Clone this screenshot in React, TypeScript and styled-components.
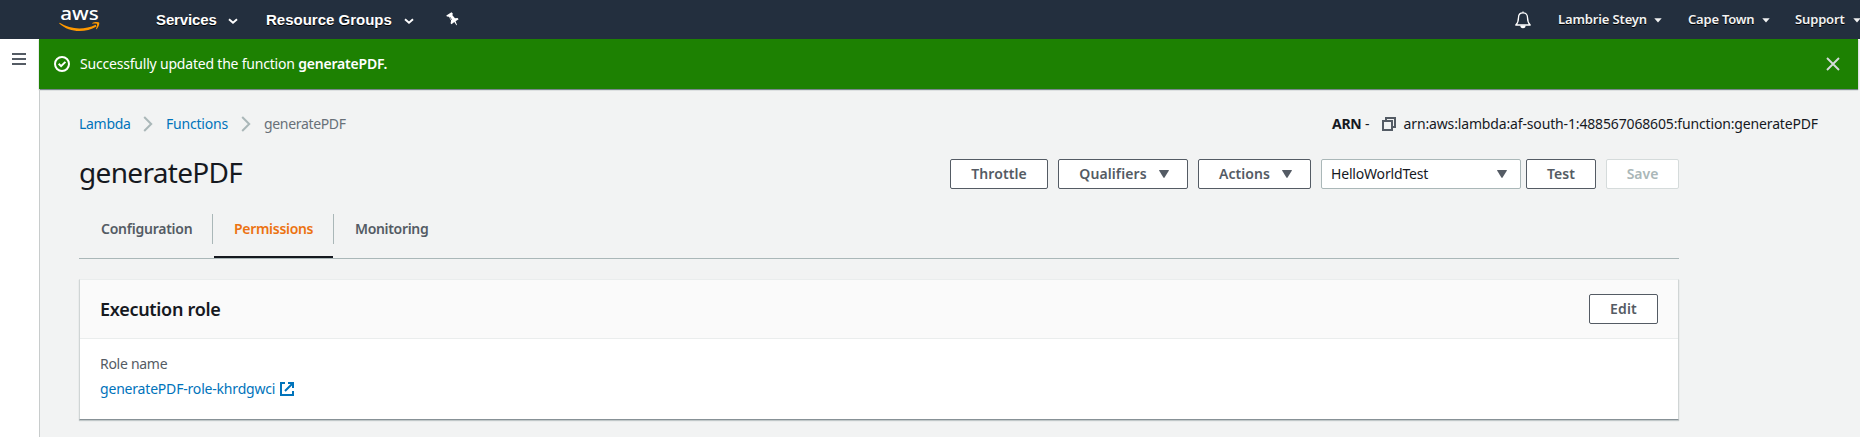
import React from "react";
import styled, { createGlobalStyle, css } from "styled-components";

const GlobalStyle = createGlobalStyle`
  * { box-sizing: border-box; }
  html, body { margin: 0; background: #f2f3f3; overflow: hidden; }
  body {
    font-family: "Noto Sans", "Open Sans", sans-serif;
    font-size: 14px;
    line-height: 20px;
    color: #16191f;
  }
  svg { display: block; flex: none; overflow: visible; }
`;

const Page = styled.div`
  display: flex;
  flex-direction: column;
  width: 1860px;
  height: 437px;
  overflow: hidden;
`;

/* Letter spacing is given in hundredths of a pixel. */
const Label = styled.span<{ $track?: number }>`
  white-space: pre;
  letter-spacing: ${({ $track = 0 }) => $track / 100}px;
`;

const TopBar = styled.header`
  display: flex;
  justify-content: space-between;
  flex: none;
  height: 39px;
  background: #232f3e;
  color: #fff;
`;

const NavGroup = styled.nav`
  display: flex;
  align-items: center;
`;

const HomeLink = styled.a`
  display: flex;
  margin: 1px 55px 0 59px;
`;

const NavItem = styled.a<{ $width: number }>`
  display: flex;
  align-items: center;
  justify-content: space-between;
  width: ${({ $width }) => $width}px;
  font: bold 15px/37px "Liberation Sans", Arial, sans-serif;
  text-shadow: 0 1px 0 #000;

  & + & { margin-left: 28px; }
  svg { margin-top: 3px; }
`;

const PinButton = styled.span`
  display: flex;
  margin: 0 0 1px 32px;
`;

const BellButton = styled.span`
  display: flex;
  margin-right: 27px;
`;

const AccountItem = styled.a<{ $width: number }>`
  display: flex;
  align-items: center;
  justify-content: space-between;
  flex: none;
  width: ${({ $width }) => $width}px;
  font-size: 13px;
  font-weight: 600;
  line-height: 39px;
  color: #f2f3f3;
  text-shadow: 0 1px 0 #000;

  & + & { margin-left: 26px; }
  &:last-child { margin-right: -1px; margin-left: 25px; }
  svg { margin-top: 1px; }
`;

const Body = styled.div`
  display: flex;
  flex: 1;
  min-height: 0;
`;

const Sidebar = styled.aside`
  flex: none;
  width: 39px;
  padding: 14px 0 0 12px;
  background: #fff;
`;

const Main = styled.main`
  display: flex;
  flex-direction: column;
  flex: 1;
  min-width: 0;
`;

const Flash = styled.div`
  display: flex;
  align-items: center;
  flex: none;
  height: 50px;
  margin-right: 2px;
  padding: 0 18px 0 15px;
  background: #1d8102;
  color: #fff;
  box-shadow: 0 1px 1px rgba(0, 28, 36, 0.5);
`;

const FlashText = styled.p`
  flex: 1;
  margin: 0 0 0 10px;
  b { font-weight: 600; }
`;

const Content = styled.div`
  flex: 1;
  padding: 25px 42px 0 39px;
  border-left: 1px solid #c8cccc;
`;

const TopLine = styled.div`
  display: flex;
  justify-content: space-between;
  height: 20px;
`;

const Breadcrumbs = styled.div`
  display: flex;
  align-items: center;
  color: #0073bb;
`;

const Crumb = styled.span<{ $width: number; $current?: boolean }>`
  display: flex;
  align-items: center;
  justify-content: space-between;
  width: ${({ $width }) => $width}px;
  margin-right: 13px;
  ${({ $current }) => $current && css`color: #687078;`}
`;

const Arn = styled.div`
  display: flex;
  align-items: center;
  b { font-weight: 700; }
  svg { margin: 0 8px 0 12px; }
`;

const Column = styled.div`
  width: 1600px;
`;

const TitleRow = styled.div`
  display: flex;
  justify-content: space-between;
  height: 30px;
  margin-top: 25px;
`;

const Title = styled.h1`
  margin: 0;
  font-size: 28px;
  font-weight: 400;
  line-height: 27px;
`;

const Actions = styled.div`
  display: flex;
`;

const Button = styled.button<{ $width: number; $gap?: number; $disabled?: boolean }>`
  display: flex;
  align-items: center;
  justify-content: center;
  gap: 12px;
  width: ${({ $width }) => $width}px;
  height: 30px;
  margin: 0 0 0 ${({ $gap = 0 }) => $gap}px;
  padding: 0;
  border: 1px solid ${({ $disabled }) => ($disabled ? "#d5dbdb" : "#545b64")};
  border-radius: 2px;
  background: #fff;
  color: ${({ $disabled }) => ($disabled ? "#aab7b8" : "#545b64")};
  font: 600 14px/20px "Noto Sans", sans-serif;
`;

const MenuButton = styled(Button)`
  padding-left: 2px;
`;

const Select = styled.div`
  display: flex;
  align-items: center;
  justify-content: space-between;
  width: 200px;
  height: 30px;
  margin-left: 10px;
  padding: 0 13px 0 9px;
  border: 1px solid #aab7b8;
  border-radius: 2px;
  background: #fff;
  color: #16191f;
`;

const Tabs = styled.div`
  display: flex;
  height: 45px;
  margin-top: 25px;
  border-bottom: 1px solid #aab7b8;
`;

const Tab = styled.div<{ $active?: boolean }>`
  display: flex;
  height: 44px;
  padding-left: 21px;
  line-height: 29px;
  font-weight: 600;
  color: #545b64;
  ${({ $active }) => $active && css`
    margin-left: 1px;
    padding-left: 20px;
    color: #ec7211;
    border-bottom: 2px solid #16191f;
  `}
`;

const TabLabel = styled(Label)<{ $width: number }>`
  width: ${({ $width }) => $width}px;
`;

const FirstTab = styled(Tab)`
  padding-left: 22px;
`;

const TabDivider = styled.i`
  width: 1px;
  height: 30px;
  background: #aab7b8;
`;

const Card = styled.section`
  display: flex;
  flex-direction: column;
  height: 141px;
  margin-top: 20px;
  background: #fff;
  border: 1px solid #d0d5d5;
  border-top-color: #eaeded;
  border-bottom-color: #879196;
  box-shadow: 0 1px 1px rgba(0, 28, 36, 0.2);
`;

const CardHeader = styled.div`
  display: flex;
  align-items: center;
  justify-content: space-between;
  height: 59px;
  padding: 0 20px;
  background: #fafafa;
  border-bottom: 1px solid #eaeded;
`;

const CardTitle = styled.h2`
  margin: 0;
  font-size: 18px;
  font-weight: 600;
  line-height: 21px;
`;

const CardBody = styled.div`
  padding: 15px 20px;
`;

const FieldLabel = styled.div`
  color: #545b64;
`;

const FieldLink = styled.a`
  display: flex;
  align-items: center;
  gap: 5px;
  margin-top: 5px;
  color: #0073bb;
`;

const WordMark = styled.text`
  font: 500 18px "Noto Sans", sans-serif;
  fill: #fff;
`;

const AwsLogo = () => (
  <svg width="42" height="28" viewBox="0 0 42 28">
    <WordMark x="1.200" y="14" textLength="38.500" lengthAdjust="spacingAndGlyphs">aws</WordMark>
    <path d="M.6 16.800C12 23.800 25 24.200 36.700 18.700l.8 1.700C26 27.200 10.500 26.800 .2 17.500z" fill="#ff9900" />
    <path d="M33.300 17.100c2-1.400 5.600-1.400 6.700-.5.9 1-.4 4.900-2.500 6.700l-.6-.3c.8-2 1.600-4.200 1.100-4.900s-2.700-.6-4.700-.3z" fill="#ff9900" />
  </svg>
);

const NavChevron = () => (
  <svg width="10" height="7" viewBox="0 0 10 7" fill="none" stroke="#fff" strokeWidth="1.9">
    <path d="M1 1.200l4 3.600 4-3.600" />
  </svg>
);

const Caret = () => (
  <svg width="8" height="5" viewBox="0 0 8 5" fill="#f2f3f3">
    <path d="M.3.300h7.400L4 4.500z" />
  </svg>
);

const PinIcon = () => (
  <svg width="14" height="15" viewBox="0 0 14 15" fill="#fff">
    <path d="M.3 3.500L5.500.2l1.300 1.300-.4 1.700 2.600 3 2.600-.3 1 1.300-3 2.100 1.400 3.600-.6.4-2.100-3.200-2.800 2.200-.9-1.100.5-2.700-2.300-3.700-1.900-.2z" />
    <path d="M3.800 5l1.900 2.800" stroke="#232f3e" strokeWidth=".7" />
  </svg>
);

const BellIcon = () => (
  <svg width="16" height="18" viewBox="0 0 16 18" fill="none" stroke="#fff" strokeWidth="1.300">
    <path d="M8 1.800c-2.900 0-4.500 2-4.500 4.700 0 3.600-.6 5.400-2.700 7.500h14.400c-2.100-2.100-2.700-3.900-2.700-7.500 0-2.700-1.600-4.700-4.500-4.700z" strokeLinejoin="round" />
    <path d="M7 1.500a1 1 0 0 1 2 0zM5.300 14.500a2.700 2.700 0 0 0 5.400 0z" fill="#fff" stroke="none" />
    <path d="M6 15.200h4l-2 1.600z" fill="#fff" strokeWidth=".8" />
  </svg>
);

const MenuIcon = () => (
  <svg width="14" height="12" viewBox="0 0 14 12" fill="#545b64">
    <path d="M0 0h14v2H0zM0 5h14v2H0zM0 10h14v2H0z" />
  </svg>
);

const CheckIcon = () => (
  <svg width="16" height="16" viewBox="0 0 16 16" fill="none" stroke="#fff" strokeWidth="2">
    <circle cx="8" cy="8" r="7" />
    <path d="M4.700 7.800l2.400 2.400 4.300-4.300" />
  </svg>
);

const CloseIcon = () => (
  <svg width="14" height="14" viewBox="0 0 14 14" fill="none" stroke="#d5dbdb" strokeWidth="1.900">
    <path d="M1 1l12 12M13 1L1 13" />
  </svg>
);

const CrumbArrow = () => (
  <svg width="10" height="16" viewBox="0 0 10 16" fill="none" stroke="#aab7b8" strokeWidth="2">
    <path d="M1.200 1l7 7-7 7" />
  </svg>
);

const CopyIcon = () => (
  <svg width="14" height="14" viewBox="0 0 14 14" fill="none" stroke="#545b64" strokeWidth="2">
    <path d="M1 4h9v9H1z" />
    <path d="M4 4V1h9v9h-3" />
  </svg>
);

const DownIcon = () => (
  <svg width="10" height="8" viewBox="0 0 10 8" fill="#545b64">
    <path d="M.5 0h9q.7 0 .3.700L5.600 7.500q-.6.800-1.200 0L.2.700Q-.2 0 .5 0z" />
  </svg>
);

const ExternalIcon = () => (
  <svg width="14" height="14" viewBox="0 0 14 14" fill="none" stroke="#0073bb" strokeWidth="2">
    <path d="M5 1H1v12h12V9" />
    <path d="M8 1h5v5M12.800 1.200L5 9" />
  </svg>
);

export default function App() {
  return (
    <Page>
      <GlobalStyle />
      <TopBar>
        <NavGroup>
          <HomeLink><AwsLogo /></HomeLink>
          <NavItem $width={82}><Label $track={-12}>Services</Label><NavChevron /></NavItem>
          <NavItem $width={148}><Label>Resource Groups</Label><NavChevron /></NavItem>
          <PinButton><PinIcon /></PinButton>
        </NavGroup>
        <NavGroup>
          <BellButton><BellIcon /></BellButton>
          <AccountItem $width={104}><Label $track={-14}>Lambrie Steyn</Label><Caret /></AccountItem>
          <AccountItem $width={82}><Label $track={-22}>Cape Town</Label><Caret /></AccountItem>
          <AccountItem $width={66}><Label $track={-15}>Support</Label><Caret /></AccountItem>
        </NavGroup>
      </TopBar>
      <Body>
        <Sidebar><MenuIcon /></Sidebar>
        <Main>
          <Flash>
            <CheckIcon />
            <FlashText>
              <Label $track={-20}>Successfully updated the function </Label>
              <b><Label $track={-20}>generatePDF.</Label></b>
            </FlashText>
            <CloseIcon />
          </Flash>
          <Content>
            <TopLine>
              <Breadcrumbs>
                <Crumb $width={74}><Label $track={-30}>Lambda</Label><CrumbArrow /></Crumb>
                <Crumb $width={85}><Label $track={-20}>Functions</Label><CrumbArrow /></Crumb>
                <Crumb $width={84} $current><Label $track={-33}>generatePDF</Label></Crumb>
              </Breadcrumbs>
              <Arn>
                <b><Label $track={-30}>ARN</Label></b>
                <Label> -</Label>
                <CopyIcon />
                <Label $track={-15}>arn:aws:lambda:af-south-1:488567068605:function:generatePDF</Label>
              </Arn>
            </TopLine>
            <Column>
              <TitleRow>
                <Title><Label $track={-68}>generatePDF</Label></Title>
                <Actions>
                  <Button $width={98}><Label $track={10}>Throttle</Label></Button>
                  <MenuButton $width={130} $gap={10}><Label $track={10}>Qualifiers</Label><DownIcon /></MenuButton>
                  <MenuButton $width={113} $gap={10}><Label $track={5}>Actions</Label><DownIcon /></MenuButton>
                  <Select><Label $track={-18}>HelloWorldTest</Label><DownIcon /></Select>
                  <Button $width={70} $gap={5}><Label>Test</Label></Button>
                  <Button $width={73} $gap={10} $disabled><Label>Save</Label></Button>
                </Actions>
              </TitleRow>
              <Tabs>
                <FirstTab><TabLabel $width={111} $track={-24}>Configuration</TabLabel><TabDivider /></FirstTab>
                <Tab $active><TabLabel $width={99} $track={-30}>Permissions</TabLabel></Tab>
                <TabDivider />
                <Tab><TabLabel $width={90} $track={-32}>Monitoring</TabLabel></Tab>
              </Tabs>
              <Card>
                <CardHeader>
                  <CardTitle><Label $track={-30}>Execution role</Label></CardTitle>
                  <Button $width={69}><Label $track={15}>Edit</Label></Button>
                </CardHeader>
                <CardBody>
                  <FieldLabel><Label $track={-28}>Role name</Label></FieldLabel>
                  <FieldLink><Label $track={-19}>generatePDF-role-khrdgwci</Label><ExternalIcon /></FieldLink>
                </CardBody>
              </Card>
            </Column>
          </Content>
        </Main>
      </Body>
    </Page>
  );
}
